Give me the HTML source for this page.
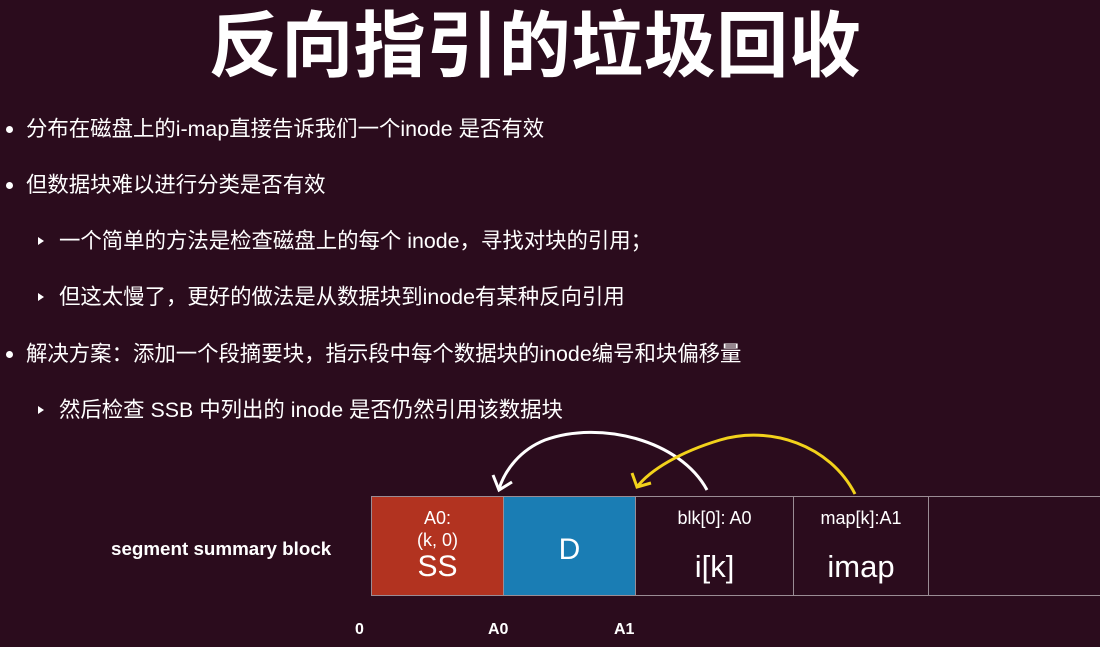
<!DOCTYPE html>
<html><head><meta charset="utf-8"><style>
body{margin:0;width:1100px;height:647px;background:#2b0c1d;overflow:hidden;position:relative;font-family:"Liberation Sans","Noto Sans CJK SC",sans-serif;color:#fff}
.a{position:absolute;white-space:nowrap}
.t{left:0;width:1070px;text-align:center;top:2px;font-size:72px;font-weight:bold;line-height:90px;letter-spacing:0.5px}
.b{font-size:21.4px;line-height:24px}
.dot{position:absolute;width:7px;height:7px;border-radius:50%;background:#fff}
.tri{position:absolute;width:0;height:0;border-top:4px solid transparent;border-bottom:4px solid transparent;border-left:6px solid #fff}
.box{position:absolute;top:496px;height:100px;border:1px solid #9a8c94;box-sizing:border-box;text-align:center;font-family:"Liberation Sans",sans-serif}
.lbl{font-weight:bold;font-size:16px;font-family:"Liberation Sans",sans-serif}
</style></head><body>
<div class="a t">反向指引的垃圾回收</div>

<div class="dot" style="left:6px;top:126px"></div>
<div class="a b" style="left:26px;top:117px">分布在磁盘上的i-map直接告诉我们一个inode 是否有效</div>
<div class="dot" style="left:6px;top:182px"></div>
<div class="a b" style="left:26px;top:173px">但数据块难以进行分类是否有效</div>
<div class="tri" style="left:38px;top:237px"></div>
<div class="a b" style="left:59px;top:229px">一个简单的方法是检查磁盘上的每个 inode，寻找对块的引用；</div>
<div class="tri" style="left:38px;top:293px"></div>
<div class="a b" style="left:59px;top:285px">但这太慢了，更好的做法是从数据块到inode有某种反向引用</div>
<div class="dot" style="left:6px;top:351px"></div>
<div class="a b" style="left:26px;top:342px">解决方案：添加一个段摘要块，指示段中每个数据块的inode编号和块偏移量</div>
<div class="tri" style="left:38px;top:406px"></div>
<div class="a b" style="left:59px;top:398px">然后检查 SSB 中列出的 inode 是否仍然引用该数据块</div>

<div class="box" style="left:371px;width:133px;background:#b23320">
<div style="font-size:18px;line-height:22px;margin-top:10px">A0:<br>(k, 0)</div><div style="font-size:30px;line-height:32px">SS</div></div>
<div class="box" style="left:503px;width:133px;background:#1a7db4"><div style="font-size:30px;margin-top:36px">D</div></div>
<div class="box" style="left:635px;width:159px"><div style="font-size:18px;margin-top:11px">blk[0]: A0</div><div style="font-size:31px;margin-top:20px">i[k]</div></div>
<div class="box" style="left:793px;width:136px"><div style="font-size:18px;margin-top:11px">map[k]:A1</div><div style="font-size:31px;margin-top:20px">imap</div></div>
<div class="box" style="left:928px;width:180px"></div>

<div class="a lbl" style="left:111px;top:538px;font-size:18.8px">segment summary block</div>
<div class="a lbl" style="left:355px;top:621px">0</div>
<div class="a lbl" style="left:488px;top:621px">A0</div>
<div class="a lbl" style="left:614px;top:621px">A1</div>

<svg class="a" style="left:0;top:0" width="1100" height="647">
<path d="M707 490 C680 440 600 420 545 440 C520 450 505 470 499 489" fill="none" stroke="#fff" stroke-width="3"/>
<path d="M493 475 L499 490 L512 482" fill="none" stroke="#fff" stroke-width="3"/>
<path d="M855 494 C830 445 770 425 720 440 C680 452 650 470 637 487" fill="none" stroke="#f2d21b" stroke-width="3"/>
<path d="M632 473 L637 487 L651 483" fill="none" stroke="#f2d21b" stroke-width="3"/>
</svg>
</body></html>
